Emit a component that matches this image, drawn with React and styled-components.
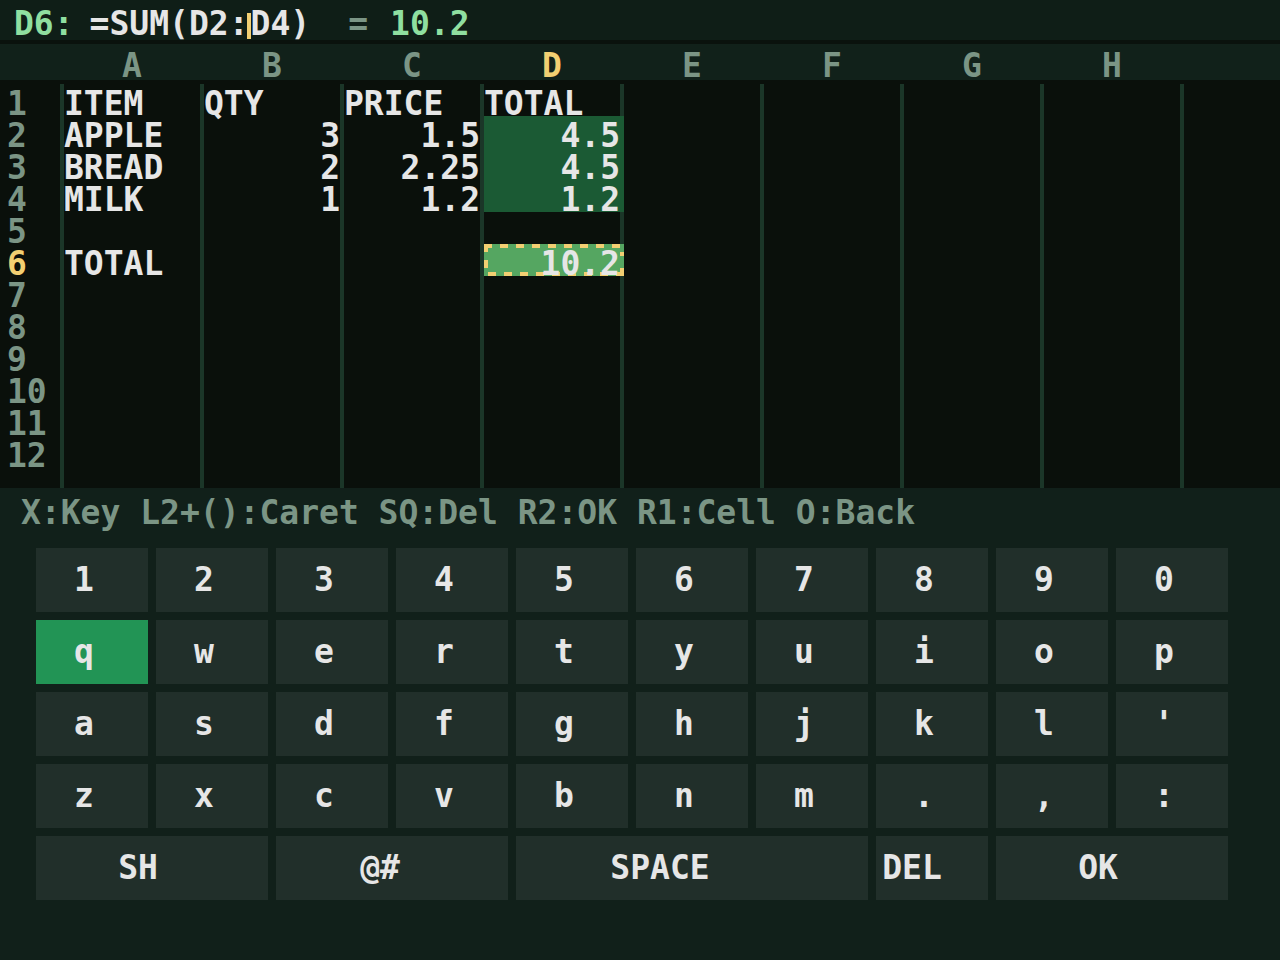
import React from "react";
import styled, { createGlobalStyle, css } from "styled-components";

const GlobalStyle = createGlobalStyle`
  html, body {
    margin: 0;
    padding: 0;
    background: #11201a;
  }
  body {
    font-family: "DejaVu Sans Mono", "Liberation Mono", monospace;
    font-weight: bold;
    font-size: 33px;
  }
`;

const YELLOW = "#f2cf72";
const MUTED = "#7b9585";
const INK = "#e6e6e6";
const LINE = "#1b3628";

const Screen = styled.div`
  width: 1280px;
  height: 960px;
  display: flex;
  flex-direction: column;
  overflow: hidden;
  background: #11201a;
`;

const FormulaBar = styled.div`
  height: 40px;
  flex-shrink: 0;
  display: flex;
  align-items: flex-start;
  padding-left: 14px;
  line-height: 48px;
  background: #0f1e17;
  border-bottom: 4px solid #0a120d;
  white-space: pre;
`;

const CellRef = styled.span`
  color: #8fdfa0;
`;

const Expr = styled.span`
  color: ${INK};
  margin-left: 16px;
`;

const Caret = styled.span`
  display: inline-block;
  width: 4px;
  height: 26px;
  margin-left: -2px;
  vertical-align: -4px;
  background: ${YELLOW};
`;

const Equals = styled.span`
  color: ${MUTED};
  margin-left: 38px;
`;

const Result = styled.span`
  color: #8fdfa0;
  margin-left: 22px;
`;

const HeaderRow = styled.div`
  height: 36px;
  flex-shrink: 0;
  display: flex;
  padding-left: 60px;
  background: #11211a;
  line-height: 44px;
`;

const HeadCell = styled.div`
  width: 140px;
  padding-left: 4px;
  box-sizing: border-box;
  text-align: center;
  color: ${p => (p.$active ? YELLOW : MUTED)};
`;

const Sheet = styled.div`
  height: 408px;
  flex-shrink: 0;
  display: flex;
  box-sizing: border-box;
  padding-top: 4px;
  background: #0a100b;
`;

const RowHeads = styled.div`
  width: 60px;
  display: flex;
  flex-direction: column;
`;

const RowNum = styled.div`
  height: 32px;
  box-sizing: border-box;
  padding: 8px 0 0 7px;
  line-height: 24px;
  color: ${p => (p.$active ? YELLOW : MUTED)};
`;

const Column = styled.div`
  width: ${p => (p.$last ? "auto" : "140px")};
  flex: ${p => (p.$last ? 1 : "none")};
  box-sizing: border-box;
  border-left: 4px solid ${LINE};
  display: flex;
  flex-direction: column;
`;

const ants = css`
  background:
    repeating-linear-gradient(90deg, ${YELLOW} 0 8px, transparent 8px 16px) left top / 100% 4px no-repeat,
    repeating-linear-gradient(90deg, transparent 0 4px, ${YELLOW} 4px 12px, transparent 12px 16px) left bottom / 100% 4px no-repeat,
    repeating-linear-gradient(180deg, ${YELLOW} 0 8px, transparent 8px 16px) left top / 4px 100% no-repeat,
    repeating-linear-gradient(180deg, transparent 0 8px, ${YELLOW} 8px 12px, transparent 12px 16px) right top / 4px 100% no-repeat,
    #55a661;
`;

const Cell = styled.div`
  position: relative;
  height: 32px;
  box-sizing: border-box;
  padding-top: 8px;
  line-height: 24px;
  white-space: pre;
  color: ${INK};
  text-align: ${p => (p.$num ? "right" : "left")};
  ${p =>
    p.$fill &&
    css`
      z-index: 1;
      margin-right: -4px;
      padding-right: 4px;
    `}
  ${p => p.$fill === "range" && "background: #1b5a34;"}
  ${p => p.$fill === "active" && ants}
`;

const HintBar = styled.div`
  height: 60px;
  flex-shrink: 0;
  box-sizing: border-box;
  padding: 12px 0 0 21px;
  line-height: 26px;
  color: ${MUTED};
  white-space: pre;
`;

const Keyboard = styled.div`
  display: grid;
  grid-template-columns: repeat(10, 112px);
  grid-auto-rows: 64px;
  gap: 8px;
  padding: 0 36px;
`;

const Key = styled.div`
  grid-column: span ${p => p.$span || 1};
  display: flex;
  align-items: center;
  justify-content: center;
  box-sizing: border-box;
  padding-right: ${p => (p.$nudge ?? 8) * 2}px;
  line-height: 64px;
  white-space: pre;
  color: ${INK};
  background: ${p => (p.$on ? "#229455" : "#212f2a")};
`;

const cols = ["A", "B", "C", "D", "E", "F", "G", "H"];

// sheet contents, one array per column, 12 rows each
const blank = Array(12).fill("");
const data = {
  A: ["ITEM", "APPLE", "BREAD", "MILK", "", "TOTAL"],
  B: ["QTY", "3", "2", "1"],
  C: ["PRICE", "1.5", "2.25", "1.2"],
  D: ["TOTAL", "4.5", "4.5", "1.2", "", "10.2"],
};

const fillFor = (col, row) => {
  if (col !== "D") return null;
  if (row >= 1 && row <= 3) return "range";
  if (row === 5) return "active";
  return null;
};

const keyRows = ["1234567890", "qwertyuiop", "asdfghjkl'", "zxcvbnm.,:"];

const bottomKeys = [
  { label: "SH", span: 2, nudge: 14 },
  { label: "@#", span: 2, nudge: 12 },
  { label: "SPACE", span: 3, nudge: 32 },
  { label: "DEL", span: 1, nudge: 20 },
  { label: "OK", span: 2, nudge: 14 },
];

const App = () => {
  return (
    <Screen>
      <GlobalStyle />
      <FormulaBar>
        <CellRef>D6:</CellRef>
        <Expr>
          =SUM(D2:
          <Caret />
          D4)
        </Expr>
        <Equals>=</Equals>
        <Result>10.2</Result>
      </FormulaBar>

      <HeaderRow>
        {cols.map(c => (
          <HeadCell key={c} $active={c === "D"}>
            {c}
          </HeadCell>
        ))}
      </HeaderRow>

      <Sheet>
        <RowHeads>
          {blank.map((_, i) => (
            <RowNum key={i} $active={i === 5}>
              {i + 1}
            </RowNum>
          ))}
        </RowHeads>
        {cols.map(c => (
          <Column key={c}>
            {blank.map((_, r) => {
              const v = (data[c] && data[c][r]) || "";
              return (
                <Cell key={r} $num={r > 0 && /^[\d.]+$/.test(v)} $fill={fillFor(c, r)}>
                  {v}
                </Cell>
              );
            })}
          </Column>
        ))}
        <Column $last />
      </Sheet>

      <HintBar>X:Key L2+():Caret SQ:Del R2:OK R1:Cell O:Back</HintBar>

      <Keyboard>
        {keyRows.map(row =>
          row.split("").map(ch => (
            <Key key={ch} $on={ch === "q"}>
              {ch}
            </Key>
          )),
        )}
        {bottomKeys.map(k => (
          <Key key={k.label} $span={k.span} $nudge={k.nudge}>
            {k.label}
          </Key>
        ))}
      </Keyboard>
    </Screen>
  );
};

export default App;
